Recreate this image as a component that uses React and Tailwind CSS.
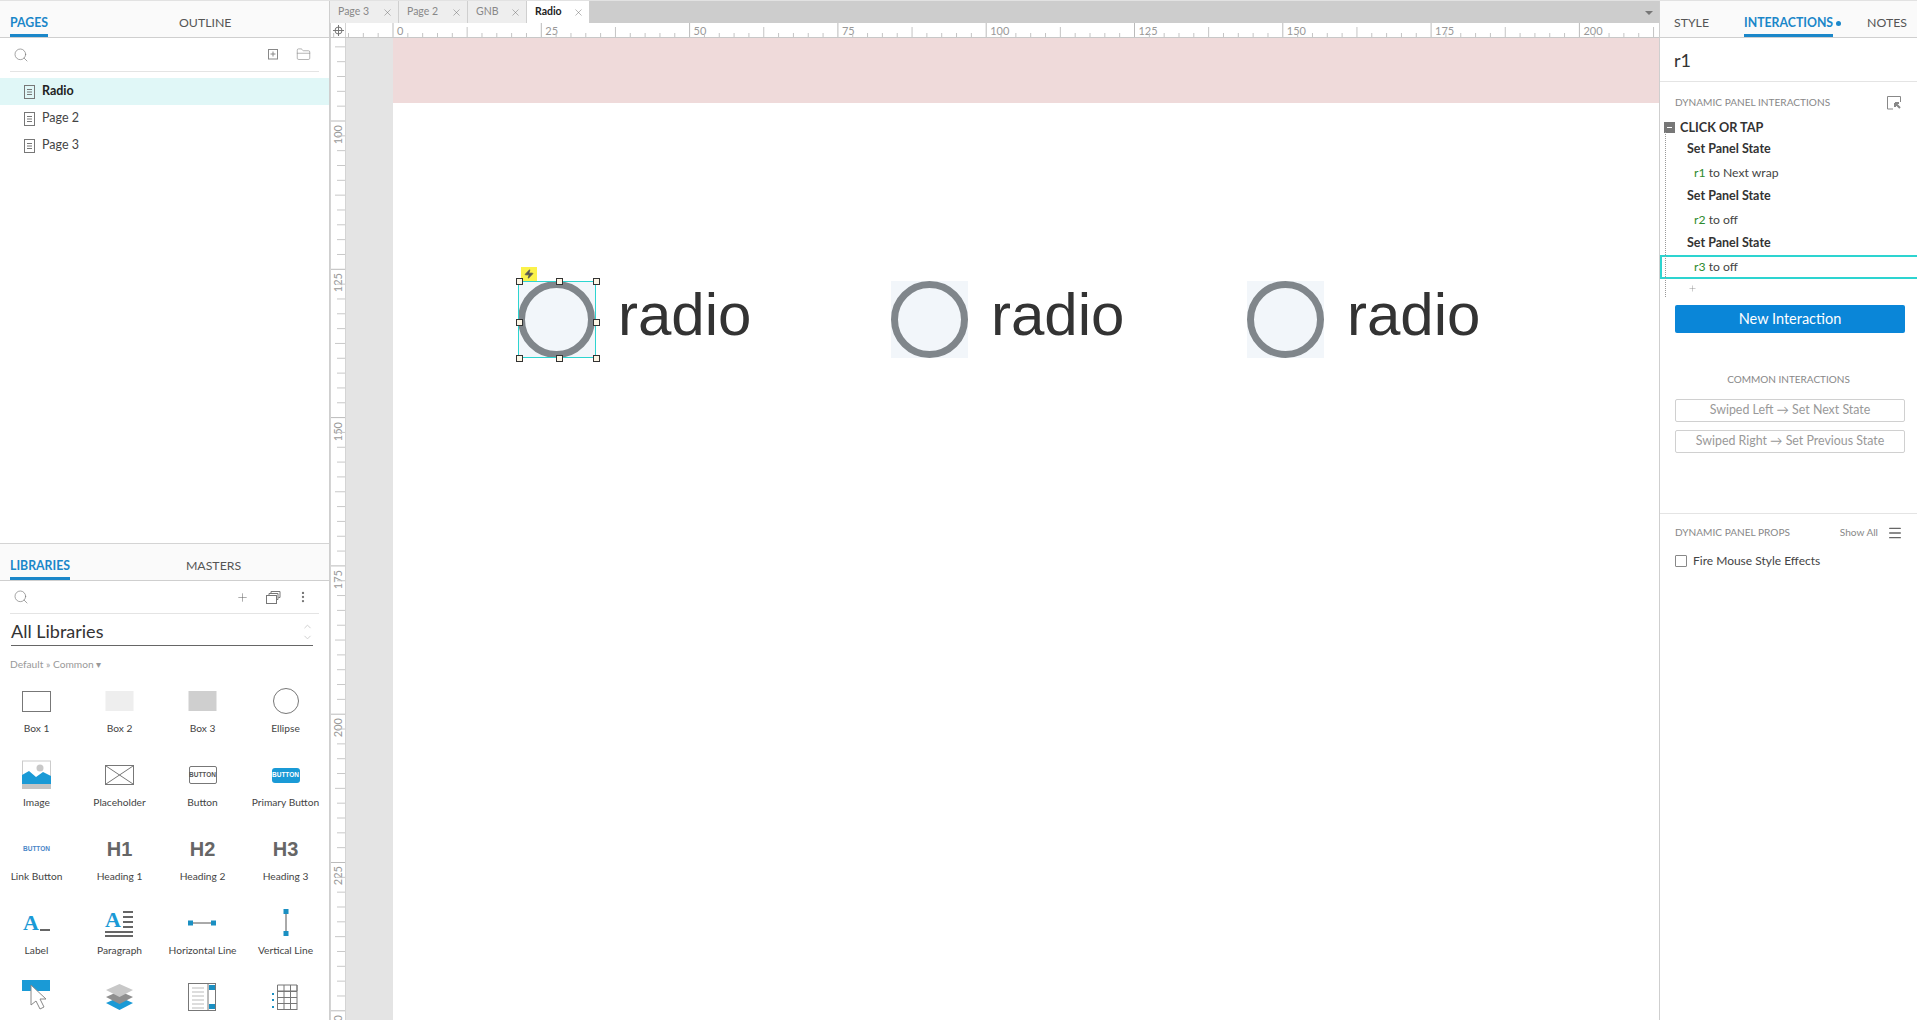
import { Search, X, Plus, FolderClosed, Zap, ChevronUp, ChevronDown, EllipsisVertical, Menu } from 'lucide-react';

const hTicks = Array.from({ length: 90 }, (_, i) => i);
const vTicks = Array.from({ length: 70 }, (_, i) => i);

// Horizontal ruler above the canvas
function TopRuler() {
  const labels = [0, 25, 50, 75, 100, 125, 150, 175, 200];
  return (
    <div className="relative h-[15px] bg-white border-b border-[#c8c8c8] overflow-hidden flex">
      <div className="w-[16px] shrink-0 bg-white border-x border-[#d4d4d4] flex items-center justify-center">
        <svg width="13" height="13" viewBox="0 0 13 13" fill="none" stroke="#777" strokeWidth="1">
          <circle cx="6.5" cy="6.5" r="3.5" />
          <path d="M6.5 1v11M1 6.5h11" />
        </svg>
      </div>
      <div className="flex pl-[47px] text-[11px] leading-[16px] text-[#999]">
        {labels.map((n) => (
          <div key={n} className="w-[148.3px] shrink-0 pl-[4px]">{n}</div>
        ))}
      </div>
      <svg className="absolute left-0 top-0" width="1330" height="15">
        {hTicks.map((i) => {
          const x = 63 + (i - 4) * 14.83;
          const major = (i - 4) % 10 === 0;
          const mid = (i - 4) % 5 === 0;
          return <line key={i} x1={x} x2={x} y1={major ? 0 : mid ? 4 : 10} y2="14" stroke={major ? '#bbb' : '#c4c4c4'} strokeWidth="1" />;
        })}
      </svg>
    </div>
  );
}

// Vertical ruler left of the canvas
function SideRuler() {
  const labels = [100, 125, 150, 175, 200, 225, 250];
  return (
    <div className="relative w-[16px] shrink-0 bg-white border-x border-[#d4d4d4] overflow-hidden pt-[83px] text-[11px] leading-[12px] text-[#999]">
      {labels.map((n) => (
        <div key={n} className="h-[148.3px] pt-[4px] pl-px">
          <div className="[writing-mode:vertical-rl] rotate-180 whitespace-nowrap">{n}</div>
        </div>
      ))}
      <svg className="absolute left-0 top-0" width="16" height="990">
        {vTicks.map((i) => {
          const y = 83 + (i - 6) * 14.83;
          const major = (i - 6) % 10 === 0;
          const mid = (i - 6) % 5 === 0;
          return <line key={i} y1={y} y2={y} x1={major ? 0 : mid ? 4 : 6} x2="15" stroke={major ? '#bbb' : '#c8c8c8'} strokeWidth="1" />;
        })}
      </svg>
    </div>
  );
}

function PageIcon() {
  return (
    <svg width="12" height="14" viewBox="0 0 12 14" fill="none" stroke="#777" strokeWidth="1" className="shrink-0">
      <rect x="0.5" y="0.5" width="10" height="13" />
      <path d="M3 4.5h5M3 7h5M3 9.5h5" />
    </svg>
  );
}

function PanelTab({ label, active, className }) {
  return (
    <div className={`relative h-full flex items-center pt-[8px] text-[12.3px] ${active ? 'text-[#1b87c9] font-bold' : 'text-[#555]'} ${className}`}>
      {label}
      {active && <div className="absolute left-0 right-0 bottom-0 h-[3px] bg-[#1b87c9]" />}
    </div>
  );
}

function DocTab({ label, active, width }) {
  return (
    <div className={`${width} h-full flex items-center justify-between pl-[8px] pr-[5px] border-r border-[#cfcfcf] text-[10.5px] ${active ? 'bg-white text-[#222] font-bold' : 'bg-[#eeeeee] text-[#888]'}`}>
      {label}
      <X size={11} strokeWidth={1} color="#666" />
    </div>
  );
}

const stroke = { fill: 'none', stroke: '#777', strokeWidth: 1 };
const tinyLabel = "text-[6.5px] font-bold leading-none font-['Liberation_Sans',sans-serif]";
const heading = "text-[20px] font-bold text-[#666] leading-none font-['Liberation_Sans',sans-serif]";
const serifA = "text-[22px] font-bold text-[#1a9ad6] leading-[20px] font-['Liberation_Serif',serif]";

const libraryItems = [
  { label: 'Box 1', icon: <svg width="30" height="30"><rect x="0.5" y="5.5" width="28" height="20" {...stroke} /></svg> },
  { label: 'Box 2', icon: <svg width="30" height="30"><rect x="0.5" y="5" width="28" height="20" fill="#eeeeee" /></svg> },
  { label: 'Box 3', icon: <svg width="30" height="30"><rect x="0.5" y="5" width="28" height="20" fill="#cfcfcf" /></svg> },
  { label: 'Ellipse', icon: <svg width="30" height="30"><circle cx="15" cy="15" r="12.5" {...stroke} /></svg> },
  {
    label: 'Image',
    icon: (
      <svg width="30" height="30">
        <rect x="0.5" y="1" width="28" height="27" fill="#fff" stroke="#ccc" />
        <circle cx="18" cy="8" r="3.5" fill="#c8c8c8" />
        <path d="M0 24V15l7-4 7 6 7-5 8 4v8z" fill="#1a9ad6" />
        <rect x="0" y="24" width="29" height="5" fill="#c4c4c4" />
      </svg>
    ),
  },
  {
    label: 'Placeholder',
    icon: (
      <svg width="30" height="30">
        <rect x="0.5" y="5.5" width="28" height="19" {...stroke} />
        <path d="M1 6l27 18M28 6L1 24" {...stroke} />
      </svg>
    ),
  },
  {
    label: 'Button',
    icon: <div className={`w-[28px] h-[18px] border border-[#777] rounded-[2px] flex items-center justify-center text-[#555] ${tinyLabel}`}>BUTTON</div>,
  },
  {
    label: 'Primary Button',
    icon: <div className={`w-[28px] h-[15px] bg-[#1a9ad6] rounded-[3px] flex items-center justify-center text-white ${tinyLabel}`}>BUTTON</div>,
  },
  { label: 'Link Button', icon: <div className={`text-[#4a86c8] ${tinyLabel}`}>BUTTON</div> },
  { label: 'Heading 1', icon: <div className={heading}>H1</div> },
  { label: 'Heading 2', icon: <div className={heading}>H2</div> },
  { label: 'Heading 3', icon: <div className={heading}>H3</div> },
  {
    label: 'Label',
    icon: (
      <div className="flex items-end gap-px h-[20px]">
        <span className={serifA}>A</span>
        <span className="w-[10px] h-[2px] bg-[#666] mb-[2px]" />
      </div>
    ),
  },
  {
    label: 'Paragraph',
    icon: (
      <div className="relative w-[29px] h-[27px]">
        <span className={`absolute left-0 top-0 ${serifA}`}>A</span>
        <svg className="absolute left-0 top-0" width="29" height="27" fill="none" stroke="#666" strokeWidth="2">
          <path d="M18 2h10M18 7h10M18 12h10M18 17h10M0 22h28M0 26h28" />
        </svg>
      </div>
    ),
  },
  {
    label: 'Horizontal Line',
    icon: (
      <svg width="30" height="30">
        <path d="M3 15h24" stroke="#555" />
        <rect x="0" y="12.5" width="5" height="5" fill="#1a8fc2" />
        <rect x="23" y="12.5" width="5" height="5" fill="#1a8fc2" />
      </svg>
    ),
  },
  {
    label: 'Vertical Line',
    icon: (
      <svg width="30" height="30">
        <path d="M15 3v24" stroke="#555" />
        <rect x="12.5" y="1" width="5" height="5" fill="#1a8fc2" />
        <rect x="12.5" y="23" width="5" height="5" fill="#1a8fc2" />
      </svg>
    ),
  },
  // last row runs off the bottom of the window, only the icons show
  {
    icon: (
      <svg width="30" height="34">
        <rect x="0" y="0" width="28" height="11" fill="#1a9ad6" />
        <path d="M9 5v20l5-4 4 8 4-2-4-8h6z" fill="#fff" stroke="#888" />
      </svg>
    ),
  },
  {
    icon: (
      <svg width="30" height="30">
        <path d="M14.5 15L1 21l13.5 7L28 21z" fill="#1a9ad6" />
        <path d="M14.5 9L1 15l13.5 7L28 15z" fill="#8f8f8f" />
        <path d="M14.5 2L1 8l13.5 7L28 8z" fill="#c8c8c8" />
      </svg>
    ),
  },
  {
    icon: (
      <svg width="30" height="30">
        <rect x="0.5" y="1.5" width="27" height="27" {...stroke} />
        <path d="M20 2v26" {...stroke} />
        <path d="M4 6h12M4 10h12M4 14h12M4 18h12M4 22h12M4 26h12" stroke="#bbb" />
        <rect x="21" y="3" width="6" height="5" fill="#1a8fc2" />
        <rect x="21" y="22" width="6" height="5" fill="#1a8fc2" />
      </svg>
    ),
  },
  {
    icon: (
      <svg width="30" height="30">
        <path d="M6 9.5h20M6 15.5h20M6 21.5h20M6 27.5h20M6.5 9v19M13 3v25M19.5 3v25M26 3v25M6.5 3h19.5v6H6.5z" {...stroke} />
        <path d="M1 12h2M1 18h2M1 25h2" stroke="#1a8fc2" strokeWidth="2" />
      </svg>
    ),
  },
];

function Handle({ className }) {
  return <div className={`absolute w-[7px] h-[7px] bg-[#fdf6e6] border border-[#333] ${className}`} />;
}

function RadioItem({ selected, className }) {
  return (
    <div className={`flex items-start gap-[23px] ${className}`}>
      <div className="relative">
        <div className="w-[77px] h-[77px] bg-[#f2f6fa]">
          <div className="w-[77px] h-[77px] rounded-full border-[7px] border-[#80868b]" />
        </div>
        {selected && (
          <>
            <div className="absolute left-0 top-0 w-[78px] h-[77px] border border-[#2dd4d0]" />
            <div className="absolute left-[3px] -top-[14px] w-[16px] h-[14px] bg-[#fbf24a] flex items-center justify-center">
              <Zap size={10} fill="#555" color="#555" />
            </div>
            <Handle className="-left-[2px] -top-[3px]" />
            <Handle className="left-[38px] -top-[3px]" />
            <Handle className="left-[75px] -top-[3px]" />
            <Handle className="-left-[2px] top-[38px]" />
            <Handle className="left-[75px] top-[38px]" />
            <Handle className="-left-[2px] top-[74px]" />
            <Handle className="left-[38px] top-[74px]" />
            <Handle className="left-[75px] top-[74px]" />
          </>
        )}
      </div>
      <div className="mt-[4px] text-[60px] leading-none text-[#333] font-['Liberation_Sans',sans-serif]">radio</div>
    </div>
  );
}

function Action({ id, text, bold, selected }) {
  let cls = 'pl-[34px] text-[#444]';
  if (bold) cls = 'pl-[27px] font-bold text-[#333]';
  if (selected) cls = 'pl-[32px] text-[#444] border-y-2 border-l-2 border-[#2dd4d0]';
  return (
    <div className={`h-[23.5px] flex items-center whitespace-pre ${bold ? 'text-[12.5px]' : 'text-[12.2px]'} ${cls}`}>
      {id && <span className="text-[#2e8b2e]">{id}</span>}
      {text}
    </div>
  );
}

export default function App() {
  return (
    <div className="w-[1917px] h-[1020px] overflow-hidden flex bg-white border-t border-[#e2e2e2] text-[#333] font-['Lato','Open_Sans',sans-serif]">
      {/* Left panel */}
      <div className="w-[330px] shrink-0 h-full flex flex-col border-r border-[#cfcfcf]">
        <div className="h-[543px] shrink-0 border-b border-[#d4d4d4]">
          <div className="h-[37px] flex bg-[#fafafa] border-b border-[#cfcfcf] pl-[10px]">
            <PanelTab label="PAGES" active />
            <PanelTab label="OUTLINE" className="ml-[131px]" />
          </div>
          <div className="mx-[10px] h-[34px] flex items-center border-b border-[#e4e4e4] pl-[3px] pr-[8px]">
            <Search size={16} strokeWidth={1} color="#777" />
            <div className="flex-1" />
            <svg width="11" height="11" viewBox="0 0 11 11" fill="none" stroke="#888" strokeWidth="1">
              <rect x="0.5" y="0.5" width="9" height="9.5" />
              <path d="M5 2.5v5M2.5 5h5" />
            </svg>
            <FolderClosed size={15} strokeWidth={1} color="#888" className="ml-[17px]" />
          </div>
          <div className="mt-[6px] text-[12.5px]">
            {['Radio', 'Page 2', 'Page 3'].map((p, i) => (
              <div key={p} className={`h-[27px] flex items-center gap-[6px] pl-[24px] ${i === 0 ? 'bg-[#e0f7f7] font-bold text-[#222]' : 'text-[#444]'}`}>
                <PageIcon />
                {p}
              </div>
            ))}
          </div>
        </div>
        <div className="flex-1 min-h-0 overflow-hidden">
          <div className="h-[37px] flex bg-[#fafafa] border-b border-[#cfcfcf] pl-[10px]">
            <PanelTab label="LIBRARIES" active />
            <PanelTab label="MASTERS" className="ml-[116px]" />
          </div>
          <div className="mx-[10px] h-[33px] flex items-center border-b border-[#e4e4e4] pl-[3px] pr-[9px]">
            <Search size={16} strokeWidth={1} color="#777" />
            <div className="flex-1" />
            <Plus size={13} strokeWidth={1} color="#666" />
            <svg width="15" height="13" viewBox="0 0 15 13" fill="none" stroke="#777" strokeWidth="1" className="ml-[17px]">
              <rect x="0.5" y="4.5" width="10" height="8" />
              <path d="M3 4V2.5h9v6h-1.5M5 2V.5h9v6h-1.5" />
            </svg>
            <EllipsisVertical size={14} strokeWidth={2} color="#777" className="ml-[15px]" />
          </div>
          <div className="ml-[11px] mr-[16px] h-[32px] pt-[4px] flex items-center justify-between border-b border-[#666]">
            <span className="text-[18px] text-[#333]">All Libraries</span>
            <div className="flex flex-col">
              <ChevronUp size={11} strokeWidth={2} color="#ccc" />
              <ChevronDown size={11} strokeWidth={2} color="#ccc" />
            </div>
          </div>
          <div className="pl-[10px] mt-[11px] h-[14px] leading-[14px] text-[10.2px] text-[#999]">Default » Common ▾</div>
          <div className="grid grid-cols-[73px_73px_73px_73px] gap-x-[10px] mt-[15px]">
            {libraryItems.map((item, i) => (
              <div key={i} className="h-[74px] flex flex-col items-center">
                <div className="h-[30px] w-[30px] flex items-center justify-center shrink-0">{item.icon}</div>
                {item.label && <div className="mt-[5px] h-[14px] leading-[14px] text-[10.2px] text-[#444] whitespace-nowrap">{item.label}</div>}
              </div>
            ))}
          </div>
        </div>
      </div>

      {/* Centre */}
      <div className="flex-1 min-w-0 h-full flex flex-col">
        <div className="h-[22px] shrink-0 flex bg-[#cdcdcd] relative">
          <DocTab label="Page 3" width="w-[69px]" />
          <DocTab label="Page 2" width="w-[69px]" />
          <DocTab label="GNB" width="w-[59px]" />
          <DocTab label="Radio" active width="w-[63px]" />
          <div className="absolute right-[6px] top-[10px] w-0 h-0 border-x-[4px] border-x-transparent border-t-[4px] border-t-[#777]" />
        </div>
        <TopRuler />
        <div className="flex-1 min-h-0 flex">
          <SideRuler />
          <div className="w-[47px] shrink-0 bg-[#e4e4e4]" />
          <div className="flex-1 min-w-0 bg-white">
            <div className="h-[65px] bg-[#efdada]" />
            <div className="pt-[178px] pl-[125px] flex">
              <RadioItem selected className="w-[373px] shrink-0" />
              <RadioItem className="w-[356px] shrink-0" />
              <RadioItem />
            </div>
          </div>
        </div>
      </div>

      {/* Right panel */}
      <div className="w-[258px] shrink-0 h-full border-l border-[#cfcfcf]">
        <div className="h-[37px] flex bg-[#fafafa] border-b border-[#cfcfcf] pl-[14px]">
          <PanelTab label="STYLE" />
          <PanelTab label="INTERACTIONS" active className="ml-[35px]" />
          <div className="w-[5px] h-[5px] rounded-full bg-[#1b87c9] ml-[3px] mt-[20px]" />
          <PanelTab label="NOTES" className="ml-[26px]" />
        </div>
        <div className="h-[44px] flex items-center pl-[14px] pt-[2px] text-[18px] text-[#333] border-b border-[#e4e4e4]">r1</div>
        <div className="mt-[14px] h-[14px] flex items-center justify-between pl-[15px] pr-[15px] text-[10.1px] text-[#888]">
          DYNAMIC PANEL INTERACTIONS
          <svg width="15" height="14" viewBox="0 0 15 14" fill="none" stroke="#888" strokeWidth="1">
            <path d="M13.5 6V.5H.5v12.5H6" />
            <path d="M8 7l5 5M8 7h4M8 7v4" strokeWidth="2" />
          </svg>
        </div>
        <div className="relative mt-[6px]">
          <div className="absolute left-[5px] top-[16px] bottom-[2px] border-l border-dotted border-[#999]" />
          <div className="h-[21.5px] flex items-center pl-[4px] pt-px gap-[5px] text-[12.7px] font-bold text-[#333]">
            <div className="w-[11px] h-[11px] bg-[#777] flex items-center justify-center">
              <div className="w-[5px] h-px bg-white" />
            </div>
            CLICK OR TAP
          </div>
          <Action text="Set Panel State" bold />
          <Action id="r1" text=" to Next wrap" />
          <Action text="Set Panel State" bold />
          <Action id="r2" text=" to off" />
          <Action text="Set Panel State" bold />
          <Action id="r3" text=" to off" selected />
          <div className="h-[20px] flex items-center pl-[28px]">
            <Plus size={9} strokeWidth={1} color="#777" />
          </div>
        </div>
        <div className="mx-[15px] mt-[6px] w-[230px] h-[28px] rounded-[2px] bg-[#0a86d8] text-white text-[14.5px] flex items-center justify-center">New Interaction</div>
        <div className="mt-[40px] h-[14px] flex items-center justify-center text-[10px] text-[#888]">COMMON INTERACTIONS</div>
        <div className="mx-[15px] mt-[12px] w-[230px] h-[23px] rounded-[2px] border border-[#d0d0d0] text-[12.4px] text-[#999] flex items-center justify-center">Swiped Left → Set Next State</div>
        <div className="mx-[15px] mt-[8px] w-[230px] h-[23px] rounded-[2px] border border-[#d0d0d0] text-[12.4px] text-[#999] flex items-center justify-center">Swiped Right → Set Previous State</div>
        <div className="mt-[60px] border-t border-[#e4e4e4]" />
        <div className="mt-[12px] h-[14px] flex items-center pl-[15px] pr-[14px] text-[10.1px] text-[#888]">
          DYNAMIC PANEL PROPS
          <span className="ml-auto">Show All</span>
          <Menu size={16} strokeWidth={2} color="#666" className="ml-[9px]" />
        </div>
        <div className="mt-[15px] h-[12px] flex items-center pl-[15px] gap-[6px] text-[12px] text-[#444]">
          <div className="w-[12px] h-[12px] border border-[#888] rounded-[1px]" />
          Fire Mouse Style Effects
        </div>
      </div>
    </div>
  );
}
